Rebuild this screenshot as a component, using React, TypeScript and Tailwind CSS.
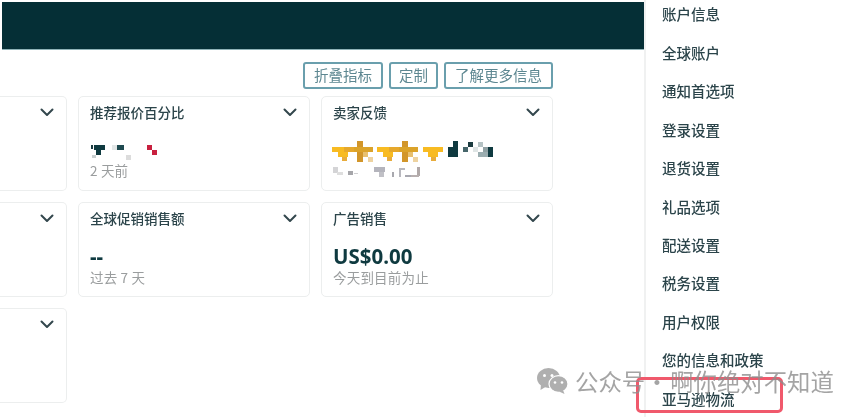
import React from "react";

const font = { fontFamily: '"Noto Sans CJK SC", "Noto Sans", sans-serif' };

function Chevron() {
  return (
    <svg width="14" height="9" viewBox="0 0 14 9" fill="none" className="shrink-0">
      <path d="M1.5 1.5 L7 7 L12.5 1.5" stroke="#33474d" strokeWidth="2" strokeLinecap="round" strokeLinejoin="round" />
    </svg>
  );
}

type Px = [number, number, number, number, string];

function Mosaic({ w, h, px }: { w: number; h: number; px: Px[] }) {
  return (
    <svg width={w} height={h} viewBox={`0 0 ${w} ${h}`} className="block" style={{ filter: "blur(0.6px)" }}>
      {px.map(([x, y, pw, ph, c], i) => (
        <rect key={i} x={x} y={y} width={pw} height={ph} fill={c} />
      ))}
    </svg>
  );
}

const pricePx: Px[] = [
  [0, 1, 2, 4, "#1c3b40"],
  [3, 1, 11, 5, "#0f3a40"],
  [5, 6, 5, 5, "#0f3a40"],
  [1, 11, 4, 3, "#c9cfd0"],
  [21, 1, 5, 5, "#e2e6e6"],
  [26, 1, 7, 5, "#1f4a50"],
  [35, 11, 5, 5, "#dcdcdc"],
  [56, 1, 5, 5, "#c8203f"],
  [61, 6, 5, 5, "#c8203f"],
];

const g = "#f8bb22";
const d = "#d2962a";
const pale = "#eed3a0";
function star(o: number): Px[] {
  return [
    [o, 6, 12, 5, g],
    [o + 12, 6, 10, 5, "#e6a82c"],
    [o + 6, 11, 10, 5, g],
    [o + 10, 16, 5, 4, "#e8ac3c"],
    [o + 25, 0, 6, 21, d],
    [o + 22, 6, 19, 5, "#dba32a"],
    [o + 31, 11, 5, 5, "#e8c070"],
    [o + 36, 16, 5, 5, pale],
  ];
}
const starPx: Px[] = [
  ...star(0),
  ...star(45),
  [91, 6, 20, 5, g],
  [96, 11, 10, 5, g],
  [99, 16, 5, 4, "#e8ac3c"],
  [121, 0, 5, 6, "#0f3a40"],
  [116, 6, 10, 10, "#0f3a40"],
  [131, 6, 5, 5, "#46666b"],
  [136, 1, 5, 5, "#1c3b40"],
  [141, 6, 5, 5, "#dfe5e5"],
  [146, 1, 5, 5, "#b5c2c4"],
  [151, 6, 5, 5, "#8fa0a3"],
  [156, 6, 5, 10, "#0f3a40"],
  [146, 11, 10, 5, "#9badb0"],
];

const subPx: Px[] = [
  [0, 1, 5, 6, "#d4d4d6"],
  [4, 6, 6, 3, "#dedede"],
  [15, 5, 5, 4, "#a6a6aa"],
  [21, 7, 4, 1, "#d0d0d2"],
  [41, 1, 11, 5, "#b4b4bc"],
  [46, 6, 5, 5, "#c0c0c6"],
  [59, 6, 2, 5, "#a8a8ae"],
  [66, 2, 6, 2, "#b8b8be"],
  [66, 4, 2, 7, "#b8b8be"],
  [72, 9, 6, 2, "#a8a8b0"],
  [84, 1, 3, 9, "#b0a8a8"],
  [78, 9, 8, 2, "#b8b0b0"],
];

function Card({
  title,
  value,
  sub,
  left,
  children,
}: {
  title?: string;
  value?: string;
  sub?: React.ReactNode;
  left?: boolean;
  children?: React.ReactNode;
}) {
  return (
    <div
      className={`h-[95px] bg-white border border-[#eceeee] flex flex-col ${
        left ? "border-l-0 rounded-r-[5px] pr-[12px]" : "rounded-[5px] pl-[11px] pr-[12px]"
      }`}
    >
      <div className="relative flex items-center justify-between h-[14px] mt-[8px]">
        <span className="text-[13.5px] leading-[14px] font-medium text-[#2b444a]">{title}</span>
        <Chevron />
      </div>
      {children}
      {value && (
        <div
          className="mt-[19px] text-[20.5px] leading-[24px] font-bold text-[#0f3a40]"
          style={{ fontFamily: '"Noto Sans", sans-serif' }}
        >
          {value}
        </div>
      )}
      {sub && <div className="mt-[1px] text-[13.5px] leading-[16px] tracking-[0.2px] text-[#9a9d9e]">{sub}</div>}
    </div>
  );
}

function OutlineButton({ children, w }: { children: React.ReactNode; w: string }) {
  return (
    <button
      className={`h-[27px] ${w} border-2 border-[#6a9fad] rounded-[3px] text-[14.5px] leading-none text-[#5d8791] bg-white flex items-center justify-center`}
    >
      {children}
    </button>
  );
}

const menu = ["账户信息", "全球账户", "通知首选项", "登录设置", "退货设置", "礼品选项", "配送设置", "税务设置", "用户权限", "您的信息和政策", "亚马逊物流"];

export default function App() {
  return (
    <div className="relative w-[862px] h-[417px] overflow-hidden bg-white flex blur-[0.4px]" style={font}>
      <div className="w-[644px] shrink-0 pt-[2px] flex flex-col">
        <div className="ml-[2px] h-[48px] bg-[#052f36] border-b border-[#8fb3b8]" />
        <div className="flex justify-end gap-[6px] pr-[91px] mt-[12px]">
          <OutlineButton w="w-[80px]">折叠指标</OutlineButton>
          <OutlineButton w="w-[49px]">定制</OutlineButton>
          <OutlineButton w="w-[109px]">了解更多信息</OutlineButton>
        </div>
        <div className="grid grid-cols-[67px_232px_232px] gap-x-[11px] gap-y-[11px] mt-[7px]">
          <Card left />
          <Card title="推荐报价百分比" sub="2 天前">
            <div className="mt-[25px] mb-[1px] ml-[1px]">
              <Mosaic w={70} h={16} px={pricePx} />
            </div>
          </Card>
          <Card title="卖家反馈">
            <div className="mt-[22px] -ml-[1px]">
              <Mosaic w={165} h={21} px={starPx} />
            </div>
            <div className="mt-[4px]">
              <Mosaic w={90} h={12} px={subPx} />
            </div>
          </Card>
          <Card left />
          <Card title="全球促销销售额" value="--" sub="过去 7 天" />
          <Card title="广告销售" value="US$0.00" sub="今天到目前为止" />
          <Card left />
        </div>
      </div>
      <div className="flex-1 border-l-2 border-[#f0f1f1] pl-[16px] flex flex-col">
        <div className="-mt-[5px] flex flex-col">
          {menu.map((m) => (
            <div key={m} className="h-[38.45px] flex items-center text-[14.5px] font-medium text-[#2b444a]">
              {m}
            </div>
          ))}
        </div>
      </div>

      <div className="absolute left-[636px] top-[377px] w-[147px] h-[36px] border-[3px] border-[#f0596c] rounded-[5px]" />

      <div className="absolute left-[537px] top-[366px] flex items-center gap-[7px] opacity-80 pointer-events-none">
        <svg width="31" height="26" viewBox="0 0 31 26" className="shrink-0">
          <ellipse cx="11.5" cy="10" rx="11.5" ry="10" fill="#9c9c9c" />
          <path d="M4 16 L3.5 22 L10 18 Z" fill="#9c9c9c" />
          <ellipse cx="21.5" cy="16" rx="9.5" ry="8.3" fill="#9c9c9c" stroke="#ffffff" strokeWidth="1.2" />
          <path d="M26 22 L27.5 26 L22 23.5 Z" fill="#9c9c9c" />
          <circle cx="7.5" cy="7.5" r="1.5" fill="#fff" />
          <circle cx="15" cy="7.5" r="1.5" fill="#fff" />
          <circle cx="18" cy="14.5" r="1.3" fill="#fff" />
          <circle cx="25" cy="14.5" r="1.3" fill="#fff" />
        </svg>
        <span className="flex text-[23.4px] leading-[30px] text-[#8e8e8e] whitespace-nowrap">
          <span>公众号</span>
          <span className="w-[25px] pr-[8px] text-center">·</span>
          <span>啊你绝对不知道</span>
        </span>
      </div>
    </div>
  );
}
